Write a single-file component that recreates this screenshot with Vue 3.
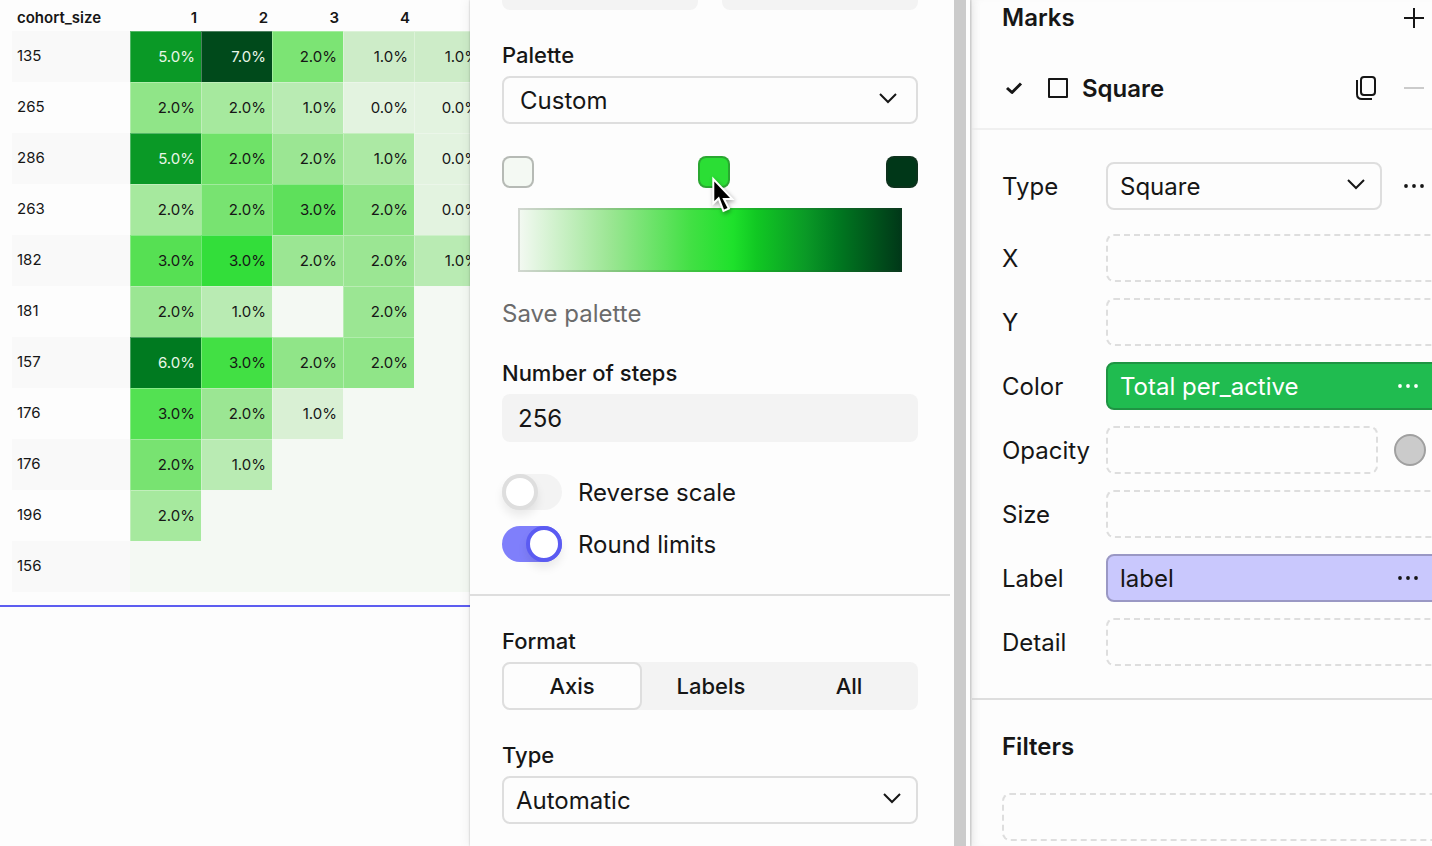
<script setup>
import { ref } from 'vue'

const headers = ['1', '2', '3', '4', '']

// Each cell is [label, background]; an empty label is an empty bin.
const rows = [
  { size: '135', cells: [['5.0%', '#0a9926'], ['7.0%', '#004a1b'], ['2.0%', '#7ce474'], ['1.0%', '#cdecc8'], ['1.0%', '#cdecc8']] },
  { size: '265', cells: [['2.0%', '#90e588'], ['2.0%', '#a6e99e'], ['1.0%', '#b9ebb3'], ['0.0%', '#e3f3e0'], ['0.0%', '#e3f3e0']] },
  { size: '286', cells: [['5.0%', '#0a9926'], ['2.0%', '#6fe268'], ['2.0%', '#9be693'], ['1.0%', '#ace9a4'], ['0.0%', '#e3f3e0']] },
  { size: '263', cells: [['2.0%', '#a6e99e'], ['2.0%', '#78e371'], ['3.0%', '#5ee05b'], ['2.0%', '#90e588'], ['0.0%', '#e3f3e0']] },
  { size: '182', cells: [['3.0%', '#56e053'], ['3.0%', '#33de3a'], ['2.0%', '#9be693'], ['2.0%', '#9be693'], ['1.0%', '#b9ebb3']] },
  { size: '181', cells: [['2.0%', '#9be693'], ['1.0%', '#b9ebb3'], ['', ''], ['2.0%', '#9be693'], ['', '']] },
  { size: '157', cells: [['6.0%', '#007a20'], ['3.0%', '#42e044'], ['2.0%', '#90e588'], ['2.0%', '#90e588'], ['', '']] },
  { size: '176', cells: [['3.0%', '#53e152'], ['2.0%', '#9be693'], ['1.0%', '#d9f0d4'], ['', ''], ['', '']] },
  { size: '176', cells: [['2.0%', '#78e371'], ['1.0%', '#b9ebb3'], ['', ''], ['', ''], ['', '']] },
  { size: '196', cells: [['2.0%', '#a6e99e'], ['', ''], ['', ''], ['', ''], ['', '']] },
  { size: '156', cells: [['', ''], ['', ''], ['', ''], ['', ''], ['', '']] },
]
const isDark = (label) => parseFloat(label) >= 5

const stops = ref(['#f4f9f3', '#2bde35', '#003718'])
const stopNames = ['Low color', 'Middle color', 'High color']
const steps = ref('256')
const palette = ref('Custom')
const formatType = ref('Automatic')
const markType = ref('Square')
const reverse = ref(false)
const roundLimits = ref(true)
const formats = ['Axis', 'Labels', 'All']
const format = ref('Axis')
</script>

<template>
  <div class="app">
    <main class="canvas">
      <table class="heatmap">
        <thead>
          <tr>
            <th class="size" scope="col">cohort_size</th>
            <th v-for="h in headers" :key="h" scope="col">{{ h }}</th>
          </tr>
        </thead>
        <tbody>
          <tr v-for="(row, i) in rows" :key="i">
            <th class="size" scope="row">{{ row.size }}</th>
            <td
              v-for="(cell, j) in row.cells"
              :key="j"
              :class="{ filled: cell[0], dark: isDark(cell[0]) }"
              :style="cell[1] ? { backgroundColor: cell[1] } : null"
            >{{ cell[0] }}</td>
          </tr>
        </tbody>
      </table>
      <hr class="selection" />
    </main>

    <section class="scale">
      <div class="scale-body">
        <div class="group first">
          <div class="limits">
            <input class="field" type="text" aria-label="Minimum" />
            <input class="field" type="text" aria-label="Maximum" />
          </div>

          <label class="label" for="palette">Palette</label>
          <div class="select">
            <select id="palette" v-model="palette" class="wide"><option>Custom</option></select>
            <svg class="chevron inset" viewBox="0 0 20 20"><path d="M2 6 L10 14 L18 6" /></svg>
          </div>

          <div class="stops">
            <div v-for="(name, i) in stopNames" :key="name" class="stop">
              <input v-model="stops[i]" type="color" :aria-label="name" />
              <svg v-if="i === 1" class="cursor" viewBox="0 0 24 38">
                <path d="M4.300 5.500 V25 L9 20.500 L14 33.500 L17.500 32 L12.300 22 H20 Z" />
              </svg>
            </div>
          </div>
          <div class="ramp"></div>
          <button class="save" type="button">Save palette</button>

          <label class="label" for="steps">Number of steps</label>
          <input id="steps" v-model="steps" class="field" type="text" />

          <div class="toggles">
            <label class="toggle"><input v-model="reverse" type="checkbox" role="switch" /><span>Reverse scale</span></label>
            <label class="toggle"><input v-model="roundLimits" type="checkbox" role="switch" /><span>Round limits</span></label>
          </div>
        </div>

        <div class="group">
          <div id="format-label" class="label">Format</div>
          <div class="segments" role="group" aria-labelledby="format-label">
            <button
              v-for="f in formats"
              :key="f"
              type="button"
              :class="{ active: f === format }"
              :aria-pressed="f === format"
              @click="format = f"
            >{{ f }}</button>
          </div>

          <label class="label spaced" for="format-type">Type</label>
          <div class="select">
            <select id="format-type" v-model="formatType"><option>Automatic</option></select>
            <svg class="chevron" viewBox="0 0 20 20"><path d="M2 6 L10 14 L18 6" /></svg>
          </div>
        </div>
      </div>
      <div class="track"><div class="thumb"></div></div>
    </section>

    <aside class="inspector">
      <div class="sheet">
        <header class="bar title">
          <h2>Marks</h2>
          <button class="icon" type="button" aria-label="Add mark">
            <svg viewBox="0 0 32 32"><path d="M6 16 H26 M16 6 V26" /></svg>
          </button>
        </header>
        <div class="bar mark">
          <svg class="check" viewBox="0 0 24 24"><path d="M5 12 L10 16.500 L19 7.500" /></svg>
          <svg class="square" viewBox="0 0 24 24"><rect x="3" y="3" width="18" height="18" /></svg>
          <h2>Square</h2>
          <button class="icon copy" type="button" aria-label="Duplicate mark">
            <svg viewBox="0 0 32 32">
              <rect x="11" y="5" width="14" height="18" rx="3" />
              <path d="M7 8 V22 Q7 27 12 27 H22" />
            </svg>
          </button>
          <button class="icon faint" type="button" aria-label="Remove mark">
            <svg viewBox="0 0 32 32"><path d="M6 16 H26" /></svg>
          </button>
        </div>

        <div class="channels">
          <div class="channel type">
            <label for="mark-type">Type</label>
            <div class="select">
              <select id="mark-type" v-model="markType"><option>Square</option></select>
              <svg class="chevron" viewBox="0 0 20 20"><path d="M2 6 L10 14 L18 6" /></svg>
            </div>
            <button class="icon dots" type="button" aria-label="Mark options">
              <svg viewBox="0 0 32 32"><circle cx="8" cy="16" r="1.900" /><circle cx="16" cy="16" r="1.900" /><circle cx="24" cy="16" r="1.900" /></svg>
            </button>
          </div>
          <div class="channel"><span>X</span><div class="well"></div></div>
          <div class="channel"><span>Y</span><div class="well"></div></div>
          <div class="channel">
            <span>Color</span>
            <div class="pill green">
              <span>Total per_active</span>
              <button class="icon dots" type="button" aria-label="Color options">
                <svg viewBox="0 0 32 32"><circle cx="8" cy="16" r="1.900" /><circle cx="16" cy="16" r="1.900" /><circle cx="24" cy="16" r="1.900" /></svg>
              </button>
            </div>
          </div>
          <div class="channel opacity">
            <span>Opacity</span>
            <div class="well"></div>
            <button class="dot" type="button" aria-label="Opacity value"></button>
          </div>
          <div class="channel"><span>Size</span><div class="well"></div></div>
          <div class="channel">
            <span>Label</span>
            <div class="pill violet">
              <span>label</span>
              <button class="icon dots" type="button" aria-label="Label options">
                <svg viewBox="0 0 32 32"><circle cx="8" cy="16" r="1.900" /><circle cx="16" cy="16" r="1.900" /><circle cx="24" cy="16" r="1.900" /></svg>
              </button>
            </div>
          </div>
          <div class="channel"><span>Detail</span><div class="well"></div></div>
        </div>

        <div class="filters">
          <h2>Filters</h2>
          <div class="well"></div>
        </div>
      </div>
    </aside>
  </div>
</template>

<style>
body {
  margin: 0;
  background: #fdfdfd;
}
</style>

<style scoped>
.app,
.app * {
  box-sizing: border-box;
}
.app {
  display: flex;
  height: 100vh;
  overflow: hidden;
  background: #fdfdfd;
  color: #161616;
  font-family: Inter, "Liberation Sans", sans-serif;
  font-size: 24px;
  line-height: 32px;
}
button,
input,
select {
  margin: 0;
  padding: 0;
  border: 0;
  background: none;
  color: inherit;
  font: inherit;
}
h2 {
  margin: 0;
  font-size: 24px;
  font-weight: 600;
}

/* Heatmap */
.canvas {
  flex: 1;
  min-width: 0;
  overflow: hidden;
}
.heatmap {
  width: 473px;
  margin-left: 12px;
  border-collapse: separate;
  border-spacing: 0;
  table-layout: fixed;
  font-size: 15px;
  line-height: 20px;
}
.heatmap th,
.heatmap td {
  padding: 0 6px 0 0;
  text-align: right;
}
.heatmap thead th {
  height: 31px;
  padding-top: 4px;
  padding-right: 4px;
  font-weight: 600;
}
.heatmap th.size {
  width: 118px;
  padding-left: 5px;
  text-align: left;
}
.heatmap tbody th {
  padding-bottom: 2px;
  font-weight: 400;
}
.heatmap tbody th,
.heatmap tbody td {
  height: 51px;
}
.heatmap tbody tr:nth-child(odd) th {
  background: #f9f9f9;
}
.heatmap td {
  background: #f4f9f3;
}
.heatmap td.filled {
  border-top: 1px solid rgba(255, 255, 255, 0.3);
  border-left: 1px solid rgba(255, 255, 255, 0.3);
}
.heatmap td.dark {
  color: #e9f7e8;
}
.selection {
  height: 2px;
  margin: 13px 0 0;
  border: 0;
  background: #5d5df0;
}

/* Scale panel */
.scale {
  position: relative;
  display: flex;
  flex: none;
  width: 500px;
  background: #fdfdfd;
  box-shadow: 0 0 2px rgba(0, 0, 0, 0.25), 0 0 12px rgba(0, 0, 0, 0.08);
}
.scale-body {
  flex: 1;
  overflow: hidden;
}
.group {
  display: flex;
  flex-direction: column;
  padding: 30px 32px;
}
.group.first {
  padding: 0 32px 32px;
  border-bottom: 2px solid #dedede;
}
.limits {
  display: grid;
  grid-template-columns: 1fr 1fr;
  gap: 24px;
  margin: -38px 0 30px;
}
.label {
  margin-bottom: 6px;
  font-size: 22px;
  font-weight: 500;
  line-height: 30px;
}
.label.spaced {
  margin-top: 30px;
}
.field {
  width: 100%;
  height: 48px;
  padding: 0 16px;
  border-radius: 8px;
  background: #f3f3f3;
}
.select {
  position: relative;
  height: 48px;
}
.select select {
  width: 100%;
  height: 48px;
  padding: 2px 12px 0;
  border: 2px solid #dedede;
  border-radius: 8px;
  appearance: none;
}
.select select.wide {
  padding: 2px 16px 0;
}
.chevron {
  position: absolute;
  top: 12px;
  right: 16px;
  width: 20px;
  height: 20px;
  fill: none;
  stroke: #161616;
  stroke-width: 2;
  pointer-events: none;
}
.chevron.inset {
  right: 20px;
}
.stops {
  display: flex;
  justify-content: space-between;
  margin: 32px 0 20px;
}
.stop {
  position: relative;
  height: 32px;
}
.stop:nth-child(2) {
  margin-left: 8px;
}
.stop input {
  display: block;
  width: 32px;
  height: 32px;
  appearance: none;
}
.stop input::-webkit-color-swatch-wrapper {
  padding: 0;
}
.stop input::-webkit-color-swatch {
  border: 2px solid rgba(40, 40, 40, 0.3);
  border-radius: 8px;
}
.cursor {
  position: absolute;
  top: 20px;
  left: 12px;
  z-index: 1;
  width: 24px;
  height: 38px;
  overflow: visible;
  fill: #000;
  stroke: #fff;
  stroke-width: 4;
  paint-order: stroke;
  filter: drop-shadow(1px 2px 2px rgba(0, 0, 0, 0.35));
}
.ramp {
  height: 64px;
  margin: 0 16px 24px;
  border: 2px solid rgba(60, 60, 60, 0.18);
  background: linear-gradient(90deg, #f4f9f3, #9be693 24%, #42e044 45%, #1ee12b 56%, #11c823 62%, #0a9926 75%, #007a20 83%, #003718) border-box;
}
.save {
  align-self: flex-start;
  margin-bottom: 28px;
  padding-top: 2px;
  color: #6b6b6b;
}
.toggles {
  display: grid;
  gap: 16px;
  margin-top: 32px;
}
.toggle {
  display: flex;
  align-items: center;
  gap: 16px;
  height: 36px;
}
.toggle span,
.channel label,
.channel span,
.mark h2 {
  padding-top: 2px;
}
.toggle input {
  width: 60px;
  height: 36px;
  border-radius: 18px;
  background: #f3f3f3;
  appearance: none;
}
.toggle input::before {
  display: block;
  width: 36px;
  height: 36px;
  box-sizing: border-box;
  border: 4px solid #dedede;
  border-radius: 18px;
  background: #fff;
  box-shadow: 0 6px 10px rgba(0, 0, 0, 0.08);
  content: "";
}
.toggle input:checked {
  background: #7f7ffb;
}
.toggle input:checked::before {
  margin-left: 24px;
  border-color: #5b5bf2;
}
.segments {
  display: grid;
  grid-template-columns: 140fr 138fr 138fr;
  border-radius: 8px;
  background: #f3f3f3;
}
.segments button {
  height: 48px;
  border: 2px solid transparent;
  border-radius: 8px;
  font-size: 22px;
  font-weight: 500;
}
.segments .active {
  border-color: #dedede;
  background: #fdfdfd;
}
.track {
  width: 20px;
  padding: 0 4px;
}
.thumb {
  height: 100%;
  background: #cbcbcb;
}

/* Inspector */
.inspector {
  flex: none;
  width: 462px;
  overflow: hidden;
  border-left: 2px solid #e8e8e8;
  box-shadow: inset 6px 0 8px -4px rgba(0, 0, 0, 0.05);
}
.sheet {
  width: 472px;
}
.bar {
  display: flex;
  align-items: center;
  padding: 0 14px 0 30px;
}
.title {
  justify-content: space-between;
  height: 36px;
}
.mark {
  height: 94px;
  padding-top: 12px;
  border-bottom: 2px solid #f0f0f0;
}
.icon {
  display: block;
  flex: none;
  width: 32px;
  height: 32px;
}
.icon svg {
  display: block;
  width: 32px;
  height: 32px;
  fill: none;
  stroke: #161616;
  stroke-width: 2;
}
.icon.dots svg {
  fill: currentColor;
  stroke: none;
}
.icon.faint svg {
  stroke: #cbcbcb;
}
.copy {
  margin-left: auto;
  margin-right: 16px;
}
.check,
.square {
  width: 24px;
  height: 24px;
  fill: none;
  stroke: #161616;
  stroke-width: 3;
  stroke-linejoin: round;
}
.square {
  margin: 0 12px 0 20px;
  stroke-width: 2;
}
.channels {
  display: grid;
  gap: 16px;
  padding: 32px 0 32px 30px;
  border-bottom: 2px solid #dedede;
}
.channel {
  display: grid;
  grid-template-columns: 88px 1fr;
  align-items: center;
  column-gap: 16px;
}
.channel.type {
  grid-template-columns: 88px 1fr 32px;
  margin-bottom: 8px;
  padding-right: 14px;
}
.channel.opacity {
  grid-template-columns: 88px 1fr 32px;
  padding-right: 18px;
}
.well {
  height: 48px;
  border: 2px dashed #dedede;
  border-radius: 8px;
}
.pill {
  display: flex;
  align-items: center;
  justify-content: space-between;
  height: 48px;
  padding: 0 18px 0 12px;
  border: 2px solid;
  border-radius: 8px;
}
.pill.green {
  border-color: #1f9443;
  background: #20bc50;
  color: #fff;
}
.pill.violet {
  border-color: #9a98c4;
  background: #c9c8fd;
}
.dot {
  width: 32px;
  height: 32px;
  border: 2px solid #a0a0a0;
  border-radius: 16px;
  background: #cbcbcb;
}
.filters {
  padding: 31px 0 0 30px;
}
.filters h2 {
  margin-bottom: 30px;
}
</style>
